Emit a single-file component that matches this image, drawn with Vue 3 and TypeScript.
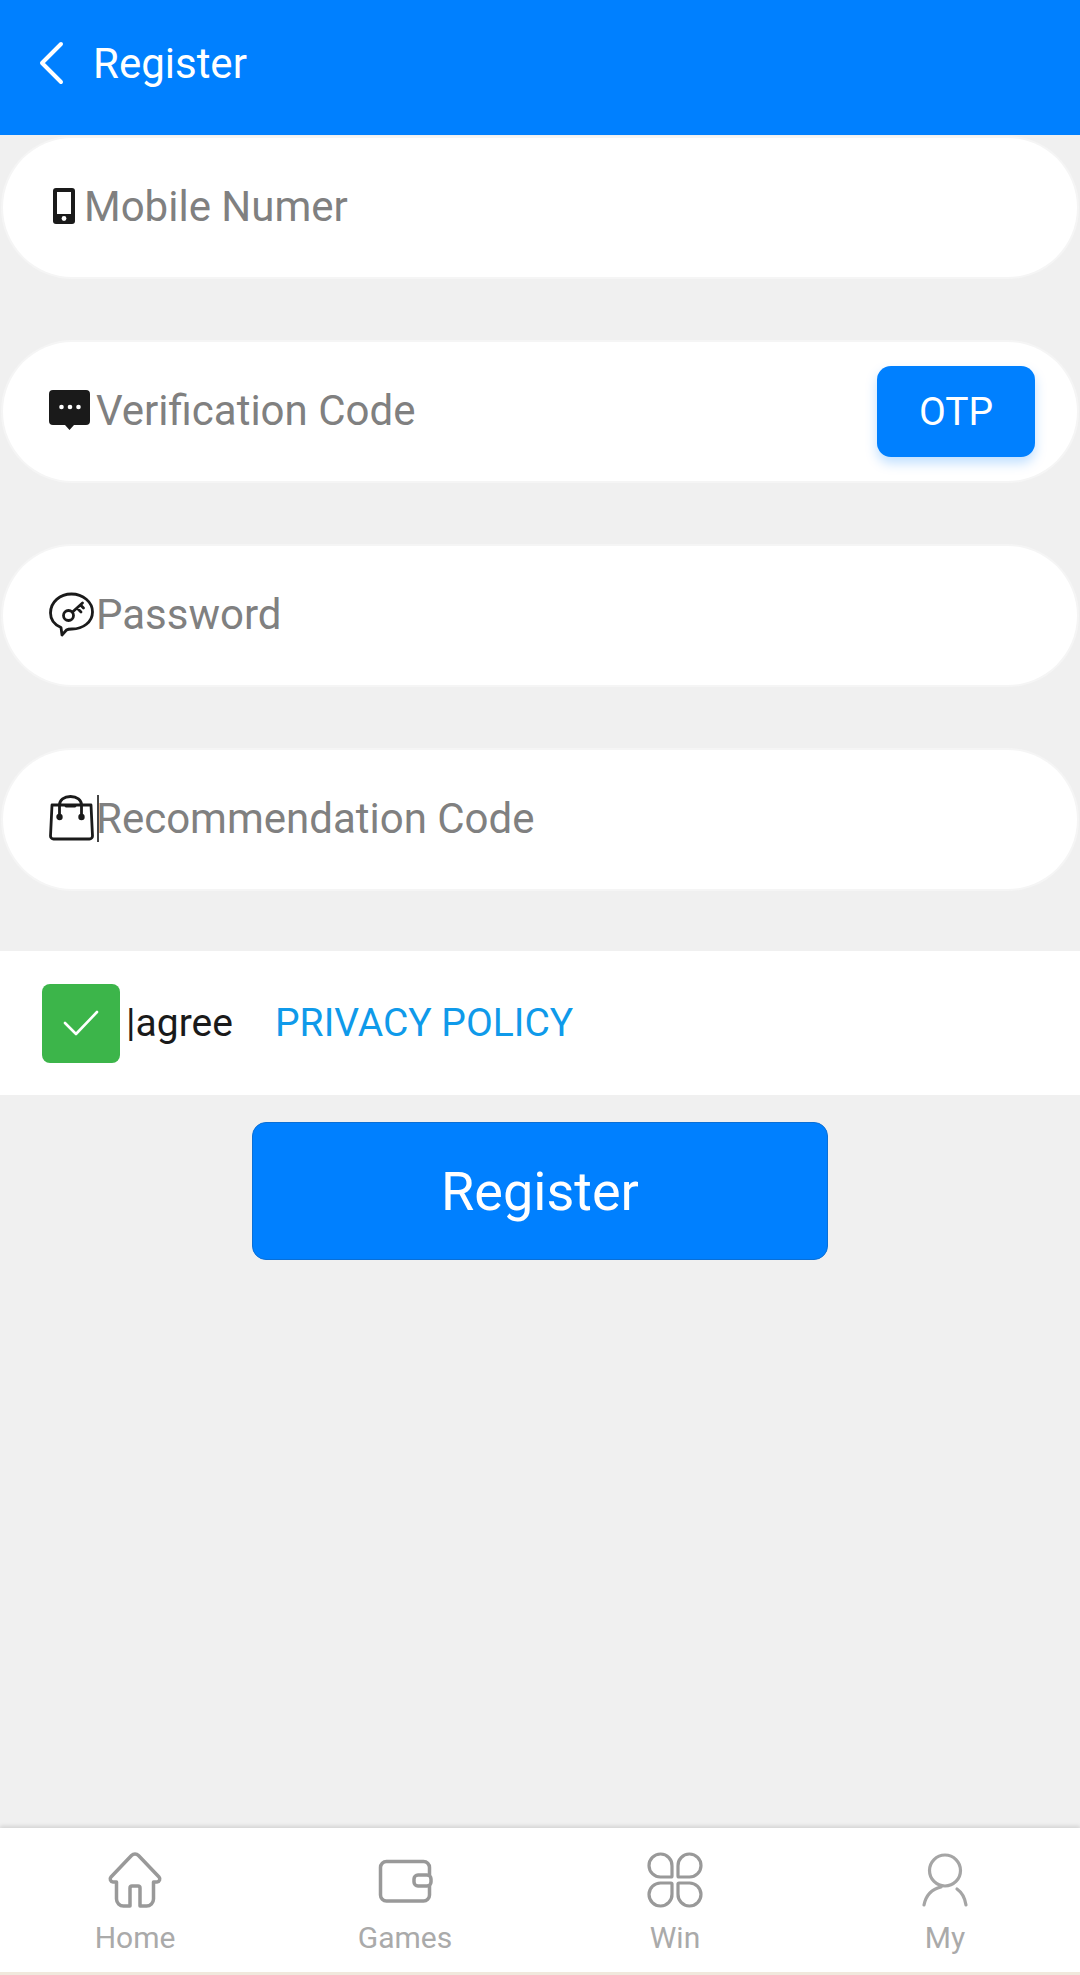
<script setup lang="ts">
const tabs = ["Home", "Games", "Win", "My"];
</script>

<template>
  <div class="page">
    <header class="topbar">
      <svg class="back" width="26" height="44" viewBox="0 0 26 44" fill="none">
        <path d="M23 3 4 22l19 19" stroke="#fff" stroke-width="4" stroke-linecap="round" stroke-linejoin="round" />
      </svg>
      <span class="title">Register</span>
    </header>

    <main class="content">
      <div class="fields">
        <div class="field field-mobile">
          <svg class="ico" width="22" height="36" viewBox="0 0 22 36">
            <rect width="22" height="36" rx="3" fill="#1a1a1a" />
            <rect x="4" y="4" width="14" height="22" fill="#fff" />
            <circle cx="11" cy="30.5" r="2.4" fill="#fff" />
          </svg>
          <span class="placeholder">Mobile Numer</span>
        </div>

        <div class="field field-code">
          <svg class="ico" width="41" height="40" viewBox="0 0 41 40">
            <path d="M4 0h33a4 4 0 0 1 4 4v27a4 4 0 0 1-4 4H25l-4.500 5-4.500-5H4a4 4 0 0 1-4-4V4a4 4 0 0 1 4-4z" fill="#1a1a1a" />
            <circle cx="12.500" cy="17" r="2.300" fill="#fff" />
            <circle cx="21" cy="17" r="2.300" fill="#fff" />
            <circle cx="29.500" cy="17" r="2.300" fill="#fff" />
          </svg>
          <span class="placeholder">Verification Code</span>
          <button class="otp">OTP</button>
        </div>

        <div class="field field-pass">
          <svg class="ico" width="45" height="45" viewBox="0 0 45 45" fill="none" stroke="#1a1a1a" stroke-width="2.800" stroke-linecap="round" stroke-linejoin="round">
            <path d="M12 35.500C5 32.500 1.500 27 1.500 21 1.500 10 11 2 22.500 2S43.500 10 43.500 20 34 37 23 37c-2 0-4 0-5.500 1L13 43z" />
            <circle cx="19.500" cy="23.500" r="5" />
            <path d="m23.500 20 10-9M28 16l4 4M31.500 13l3 3" />
          </svg>
          <span class="placeholder">Password</span>
        </div>

        <div class="field">
          <svg class="ico" width="45" height="46" viewBox="0 0 45 46" fill="none" stroke="#1a1a1a" stroke-width="2.800" stroke-linecap="round" stroke-linejoin="round">
            <path d="M3 10h39l1.500 31a3 3 0 0 1-3 3H4.500a3 3 0 0 1-3-3z" />
            <path d="M10.500 22V10C10.500 5 15 1.500 21.500 1.500S32.500 5 32.500 10v12" />
            <path d="M17 11h9" />
            <circle cx="10.500" cy="22" r="1.800" fill="#1a1a1a" />
            <circle cx="32.500" cy="22" r="1.800" fill="#1a1a1a" />
          </svg>
          <i class="caret"></i>
          <span class="placeholder">Recommendation Code</span>
        </div>
      </div>

      <div class="agree">
        <div class="check">
          <svg width="36" height="28" viewBox="0 0 36 28" fill="none">
            <path d="m2 14 11 11L34 3" stroke="#fff" stroke-width="2.600" stroke-linecap="round" stroke-linejoin="round" />
          </svg>
        </div>
        <span class="agree-text">|agree</span>
        <a class="policy">PRIVACY POLICY</a>
      </div>

      <button class="submit">Register</button>
    </main>

    <nav class="tabbar">
      <div class="tab" v-for="tab in tabs" :key="tab">
        <svg v-if="tab === 'Home'" width="56" height="58" viewBox="0 0 56 58" fill="none" stroke="#999" stroke-width="3.500" stroke-linejoin="round">
          <path d="M24.500 3.500a5 5 0 0 1 7 0L52 25a3 3 0 0 1-2 5h-3.500v17a7 7 0 0 1-7 7H33V36a2 2 0 0 0-2-2h-6a2 2 0 0 0-2 2v18h-6.500a7 7 0 0 1-7-7V30H6a3 3 0 0 1-2-5z" />
        </svg>
        <svg v-else-if="tab === 'Games'" width="56" height="58" viewBox="0 0 56 58" fill="none" stroke="#999" stroke-width="3.500" stroke-linejoin="round">
          <rect x="3.500" y="9.500" width="49" height="39.500" rx="6" />
          <rect x="37" y="23" width="17" height="11" rx="4" fill="#fff" />
        </svg>
        <svg v-else-if="tab === 'Win'" width="56" height="58" viewBox="0 0 56 58" fill="none" stroke="#999" stroke-width="3.200" stroke-linejoin="round">
          <path d="M25 24a1 1 0 0 1-1 1H14A11.500 11.500 0 1 1 25 14z" />
          <path d="M31 24a1 1 0 0 0 1 1H42A11.500 11.500 0 1 0 31 14z" />
          <path d="M25 32a1 1 0 0 0-1-1H14A11.500 11.500 0 1 0 25 42z" />
          <path d="M31 32a1 1 0 0 1 1-1H42A11.500 11.500 0 1 1 31 42z" />
        </svg>
        <svg v-else width="56" height="58" viewBox="0 0 56 58" fill="none" stroke="#a5a5a5" stroke-width="3.200" stroke-linecap="round">
          <circle cx="28" cy="18.500" r="15.500" />
          <path d="M7 53c2-10 8-16 17-18M40 37c5 3.500 8 9 9 16" />
        </svg>
        <span class="tab-label">{{ tab }}</span>
      </div>
    </nav>
  </div>
</template>

<style>
html,
body {
  margin: 0;
  background: #f0f0f0;
}
</style>

<style scoped>
.page {
  display: flex;
  flex-direction: column;
  width: 1080px;
  height: 1975px;
  background: #f0f0f0;
  font-family: Roboto, "Liberation Sans", sans-serif;
}

.topbar {
  display: flex;
  align-items: center;
  gap: 29px;
  height: 135px;
  padding: 0 0 9px 38px;
  box-sizing: border-box;
  background: #0080ff;
  flex-shrink: 0;
}
.back {
  flex-shrink: 0;
}
.title {
  color: #fff;
  font-size: 42px;
}

.content {
  flex: 1;
  display: flex;
  flex-direction: column;
  align-items: center;
}

.fields {
  width: 100%;
  display: flex;
  flex-direction: column;
  gap: 65px;
  padding: 3px 3px 0;
  box-sizing: border-box;
}
.field {
  display: flex;
  align-items: center;
  height: 139px;
  padding: 0 42px 0 46px;
  border-radius: 70px;
  background: #fff;
  box-shadow: 0 0 0 2px #f5f5f5;
}
.ico {
  flex-shrink: 0;
  margin-top: -3px;
}
.field-mobile .ico {
  margin: -3px 5px 0 4px;
}
.field-code .ico {
  margin-right: 2px;
}
.field-pass .ico {
  margin-right: -2px;
}
.placeholder {
  margin: -3px 0 0 4px;
  color: #808080;
  font-size: 42px;
  flex: 1;
}
.caret {
  width: 2px;
  height: 47px;
  margin: -3px -7px 0 3px;
  background: #444;
  flex-shrink: 0;
}

.otp {
  width: 158px;
  height: 91px;
  border: none;
  border-radius: 14px;
  background: #0080ff;
  box-shadow: 0 6px 12px rgba(0, 128, 255, 0.25);
  color: #fff;
  font: 39px Roboto, "Liberation Sans", sans-serif;
}

.agree {
  width: 100%;
  height: 144px;
  margin-top: 62px;
  display: flex;
  align-items: center;
  padding-left: 42px;
  box-sizing: border-box;
  background: #fff;
}
.check {
  width: 78px;
  height: 79px;
  display: flex;
  align-items: center;
  justify-content: center;
  border-radius: 8px;
  background: #3cb54a;
  flex-shrink: 0;
}
.agree-text {
  margin-left: 6px;
  width: 149px;
  color: #1a1a1a;
  font-size: 39px;
}
.policy {
  color: #0f9aea;
  font-size: 39px;
}

.submit {
  width: 576px;
  height: 138px;
  margin-top: 27px;
  border: 1px solid #0a6fd6;
  border-radius: 14px;
  background: #0080ff;
  color: #fff;
  font: 54px Roboto, "Liberation Sans", sans-serif;
}

.tabbar {
  display: flex;
  height: 147px;
  flex-shrink: 0;
  box-sizing: border-box;
  padding-bottom: 4px;
  background: #fff;
  border-bottom: 3px solid #f0e8dc;
  box-shadow: 0 -2px 4px rgba(0, 0, 0, 0.12);
}
.tab {
  flex: 1;
  display: flex;
  flex-direction: column;
  align-items: center;
  padding-top: 24px;
}
.tab-label {
  margin-top: 10px;
  color: #aaa;
  font-size: 30px;
  line-height: 35px;
}
</style>
